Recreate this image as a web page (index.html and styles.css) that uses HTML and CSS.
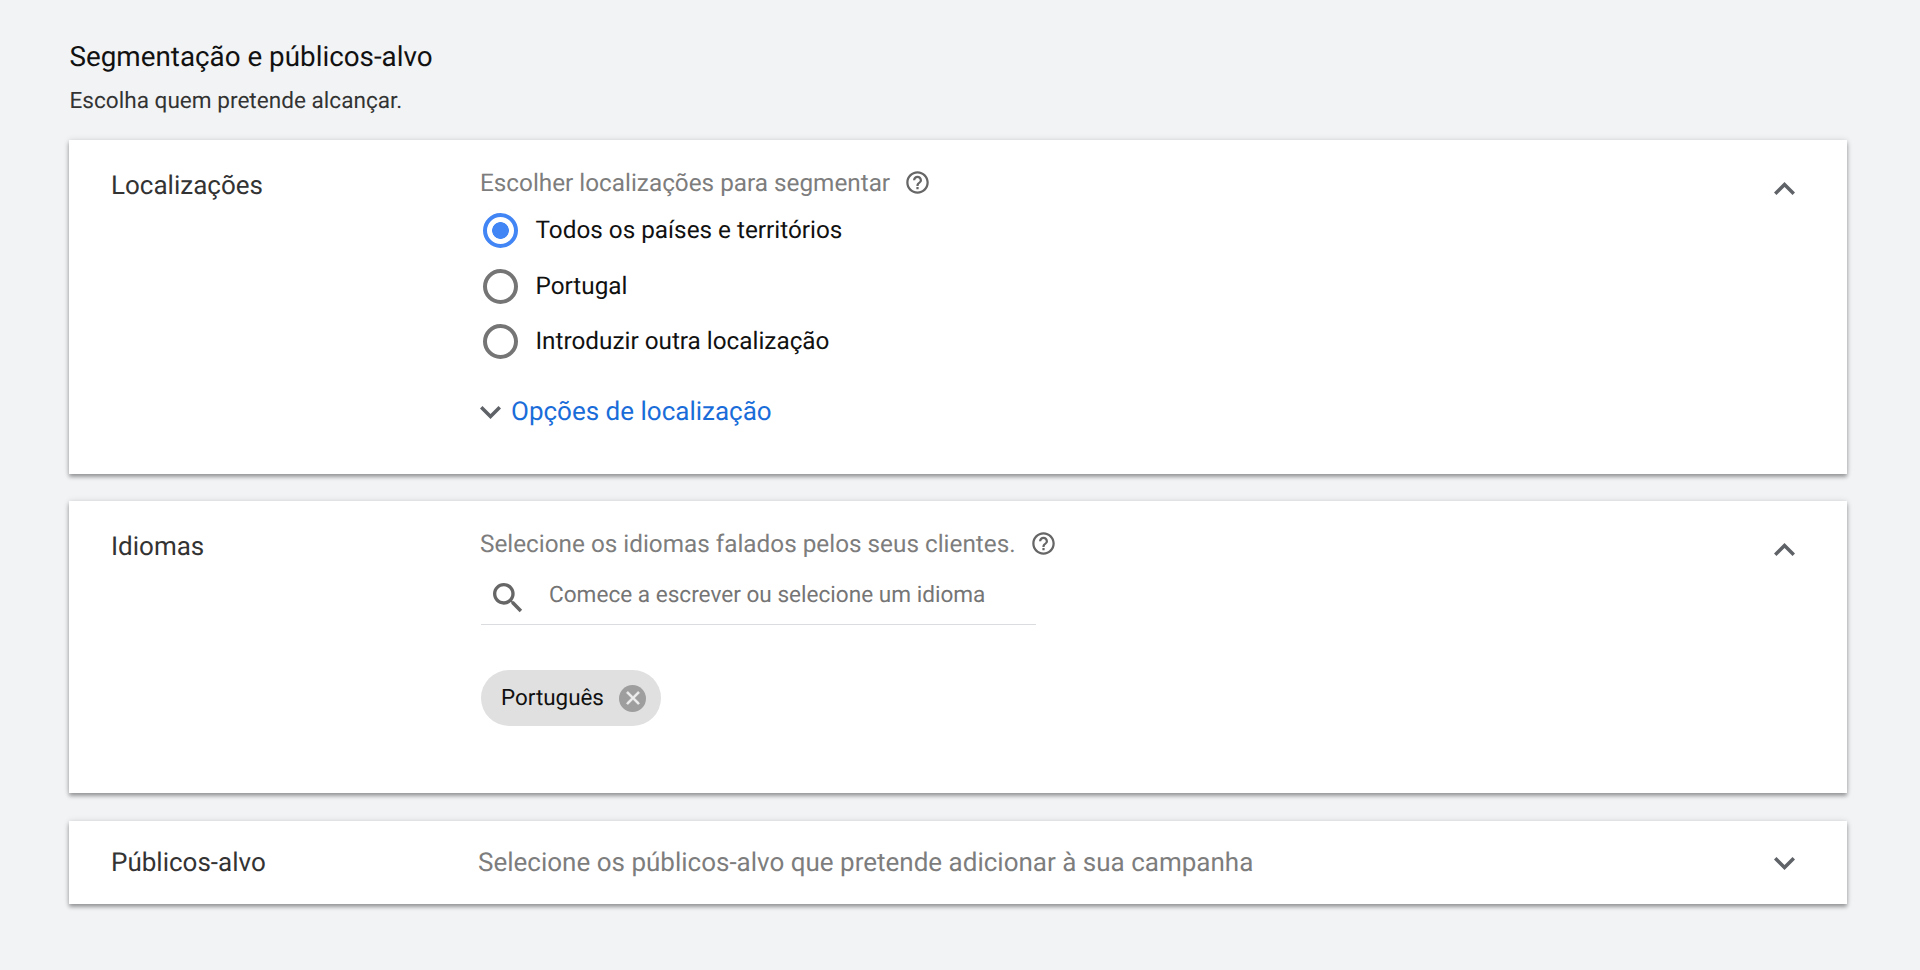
FILE: index.html
```html
<!DOCTYPE html>
<html lang="pt">
<head>
<meta charset="utf-8">
<title>Segmentação e públicos-alvo</title>
<link rel="stylesheet" href="styles.css">
</head>
<body>
<main class="page">
  <header class="intro">
    <h1 class="intro-title">Segmentação e públicos-alvo</h1>
    <p class="intro-sub">Escolha quem pretende alcançar.</p>
  </header>

  <section class="card card-loc">
    <h2 class="card-label">Localizações</h2>
    <div class="card-body">
      <div class="prompt">
        <span>Escolher localizações para segmentar</span>
        <svg class="help" viewBox="0 0 24 24"><path d="M11 18h2v-2h-2v2zm1-16C6.48 2 2 6.48 2 12s4.48 10 10 10 10-4.48 10-10S17.52 2 12 2zm0 18c-4.41 0-8-3.59-8-8s3.59-8 8-8 8 3.59 8 8-3.59 8-8 8zm0-14c-2.21 0-4 1.79-4 4h2c0-1.1.9-2 2-2s2 .9 2 2c0 2-3 1.75-3 5h2c0-2.25 3-2.5 3-5 0-2.21-1.79-4-4-4z"/></svg>
      </div>
      <ul class="radios">
        <li class="radio-row"><span class="radio radio-on"></span>Todos os países e territórios</li>
        <li class="radio-row"><span class="radio"></span>Portugal</li>
        <li class="radio-row"><span class="radio"></span>Introduzir outra localização</li>
      </ul>
      <div class="options">
        <svg class="chev" viewBox="6 8 12 8"><path d="M16.59 8.59L12 13.17 7.41 8.59 6 10l6 6 6-6z"/></svg>
        <a class="options-link">Opções de localização</a>
      </div>
    </div>
    <svg class="chev card-chev" viewBox="6 8 12 8"><path d="M7.41 15.41L12 10.83l4.59 4.58L18 14l-6-6-6 6z"/></svg>
  </section>

  <section class="card card-lang">
    <h2 class="card-label">Idiomas</h2>
    <div class="card-body">
      <div class="prompt">
        <span>Selecione os idiomas falados pelos seus clientes.</span>
        <svg class="help" viewBox="0 0 24 24"><path d="M11 18h2v-2h-2v2zm1-16C6.48 2 2 6.48 2 12s4.48 10 10 10 10-4.48 10-10S17.52 2 12 2zm0 18c-4.41 0-8-3.59-8-8s3.59-8 8-8 8 3.59 8 8-3.59 8-8 8zm0-14c-2.21 0-4 1.79-4 4h2c0-1.1.9-2 2-2s2 .9 2 2c0 2-3 1.75-3 5h2c0-2.25 3-2.5 3-5 0-2.21-1.79-4-4-4z"/></svg>
      </div>
      <div class="search">
        <svg class="search-icon" viewBox="3 3 18 18"><path d="M15.5 14h-.79l-.28-.27C15.41 12.59 16 11.11 16 9.5 16 5.91 13.09 3 9.5 3S3 5.91 3 9.5 5.91 16 9.5 16c1.61 0 3.09-.59 4.23-1.57l.27.28v.79l5 4.99L20.49 19l-4.99-5zm-6 0C7.01 14 5 11.99 5 9.5S7.01 5 9.5 5 14 7.01 14 9.5 11.99 14 9.5 14z"/></svg>
        <span class="search-text">Comece a escrever ou selecione um idioma</span>
      </div>
      <div class="chip">
        <span>Português</span>
        <span class="chip-x"><svg viewBox="0 0 24 24"><path d="M19 6.41L17.59 5 12 10.59 6.41 5 5 6.41 10.59 12 5 17.59 6.41 19 12 13.41 17.59 19 19 17.59 13.41 12z"/></svg></span>
      </div>
    </div>
    <svg class="chev card-chev" viewBox="6 8 12 8"><path d="M7.41 15.41L12 10.83l4.59 4.58L18 14l-6-6-6 6z"/></svg>
  </section>

  <section class="card card-aud">
    <h2 class="card-label">Públicos-alvo</h2>
    <p class="aud-text">Selecione os públicos-alvo que pretende adicionar à sua campanha</p>
    <svg class="chev card-chev" viewBox="6 8 12 8"><path d="M16.59 8.59L12 13.17 7.41 8.59 6 10l6 6 6-6z"/></svg>
  </section>
</main>
</body>
</html>
```
FILE: styles.css
```css
* { box-sizing: border-box; }
html, body { margin: 0; height: 100%; }
body {
  background: #f1f3f5;
  font-family: Roboto, "Noto Sans", sans-serif;
  color: #202124;
  overflow: hidden;
  text-rendering: geometricPrecision;
}
.page { padding: 40px 73px 0 69px; display: flex; flex-direction: column; }
.intro { height: 100px; padding-left: 0.5px; }
.intro-title { margin: 0; padding-top: 1px; font-size: 27.8px; line-height: 32px; font-weight: 400; color: #111; }
.intro-sub { margin: 11px 0 0; padding-top: 1px; font-size: 22.6px; line-height: 32px; color: #333; }
.card {
  background: #fff;
  box-shadow: 0 3px 4px rgba(0,0,0,.34), 0 0 6px rgba(0,0,0,.12);
  display: grid;
  grid-template-columns: 369px 1fr 21px;
  padding-left: 42px;
  padding-right: 52px;
  align-items: start;
}
.card-loc { height: 334px; margin-bottom: 27px; }
.card-lang { height: 292px; margin-bottom: 28px; }
.card-aud { height: 83px; align-items: center; }
.card-label { margin: 0; padding-top: 30px; font-size: 26px; line-height: 32px; font-weight: 400; color: #333; }
.card-aud .card-label { padding-top: 0; }
.card-body { padding-top: 26px; }
.card-chev { margin-top: 42px; }
.card-aud .card-chev { margin-top: 0; }
.chev { width: 21px; height: 14px; fill: #5f6368; flex: none; display: block; }
.prompt { display: flex; align-items: center; gap: 14px; height: 32px; font-size: 24.3px; color: #7d7d7d; }
.help { width: 27px; height: 27px; fill: #666; display: block; }
.radios { list-style: none; margin: 5px 0 0; padding: 0; }
.radio-row { display: flex; align-items: center; height: 55.5px; padding-bottom: 2px; font-size: 24.3px; color: #111; }
.radio {
  width: 35px; height: 35px; border-radius: 50%; border: 4px solid #757575;
  margin: 2px 17.5px 0 3px; flex: none; display: block;
}
.radio-on { border-color: #4285f4; background: radial-gradient(circle, #4285f4 0 8px, #fff 8.7px); }
.options { display: flex; align-items: center; gap: 10px; margin-top: 26px; height: 32px; }
.options-link { font-size: 26px; color: #1a6dd9; }
.search {
  display: flex; align-items: center; width: 555px; height: 68px; margin: -2px 0 0 1px;
  border-bottom: 1px solid #dadce0; padding: 14px 0 0 11.5px;
}
.search-icon { width: 30px; height: 30px; fill: #666; flex: none; }
.search-text { margin: -6px 0 0 26.5px; font-size: 22.6px; color: #757575; }
.chip {
  display: inline-flex; align-items: center; height: 56px; margin: 45px 0 0 1px; width: 180px;
  padding: 0 15px 0 20px; border-radius: 28px; background: #e0e0e0;
  font-size: 22.4px; color: #111; justify-content: space-between;
}
.chip-x { width: 27px; height: 27px; border-radius: 50%; background: #9e9e9e; display: flex; align-items: center; justify-content: center; }
.chip-x svg { width: 22px; height: 22px; fill: #eee; stroke: #eee; stroke-width: 1; display: block; }
.aud-text { margin: 0 0 0 -2px; font-size: 26px; line-height: 32px; color: #7d7d7d; }
```
